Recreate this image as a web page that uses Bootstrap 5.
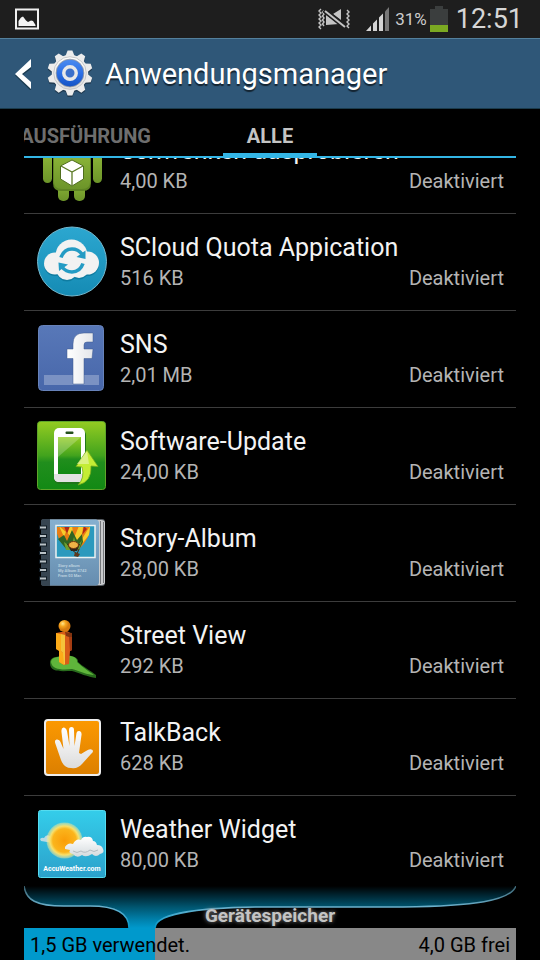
<!DOCTYPE html>
<html lang="de">
<head>
<meta charset="utf-8">
<meta name="viewport" content="width=device-width, initial-scale=1">
<title>Anwendungsmanager</title>
<link rel="stylesheet" href="https://cdn.jsdelivr.net/npm/bootstrap@5.3.0/dist/css/bootstrap.min.css">
<style>
  body { background: #000; color: #f3f3f3; font-family: Roboto, "Noto Sans", sans-serif; }
  svg { display: block; flex: none; }
  .screen { height: 100vh; overflow: hidden; }
  .statusbar, .titlebar, .tabs, .storage-panel { flex: none; }
  .statusbar { height: 38px; background: #1e1e1e; color: #ccc; padding: 0 17px 0 14px; }
  .pct { font-size: 17px; line-height: 24px; margin-left: 6px; margin-right: 3px; }
  .clock { font-size: 27px; line-height: 36px; color: #d6d6d6; margin-left: 8px; }
  .titlebar { height: 71px; background: #2f5778; border-top: 1px solid #54809c; border-bottom: 1px solid #1b3b4c; padding: 0 14px; }
  .titlebar h1 { font-size: 29px; line-height: 36px; font-weight: 400; color: #fff; text-shadow: 0 2px 1px rgba(0,0,0,.6); }
  .content-pad { margin: 0 24px; }
  .tabs { height: 49px; border-bottom: 2px solid #33b5e5; }
  .tab { border: 0; background: none; padding: 6px 0 0; font-size: 20px; line-height: 24px; font-weight: 700; color: #6e6e6e; overflow: hidden; white-space: nowrap; }
  .tab-prev { width: 127px; display: flex; justify-content: flex-end; align-items: center; }
  .tab-current { width: 94px; margin-left: 72px; color: #c4c4c4; border-bottom: 3px solid #33b5e5; padding-top: 9px; }
  .apps { min-height: 0; overflow: hidden; }
  .app { flex: none; height: 97px; padding: 12px 12px 0; gap: 12px; background: #000; color: #f3f3f3; border-bottom: 1px solid #3c3c3c; }
  .app:last-child { height: 90px; border-bottom: 0; }
  .app svg { overflow: visible; }
  .app-text { padding-top: 6px; }
  .app-name { font-size: 25px; line-height: 32px; white-space: nowrap; }
  .app-info { font-size: 20px; line-height: 28px; color: #b4b4b4; }
  .funnel svg { width: 100%; height: 42px; }
  .funnel-label { left: 0; right: 0; bottom: 0; font-size: 19px; line-height: 24px; font-weight: 700; color: #c4c4c4; text-shadow: 0 0 4px #888; }
  .storage { height: 32px; background: #888; }
  .storage .progress { --bs-progress-height: 32px; --bs-progress-bg: #888; --bs-progress-bar-bg: #0099cc; border-radius: 0; }
  .storage-text { inset: 0; padding: 2px 6px 0; font-size: 20px; line-height: 30px; color: #000; }
</style>
<script src="https://cdn.jsdelivr.net/npm/bootstrap@5.3.0/dist/js/bootstrap.bundle.min.js"></script>
</head>
<body>
<div class="screen d-flex flex-column">

  <div class="statusbar d-flex align-items-center">
    <svg class="me-auto" width="26" height="22" viewBox="0 0 26 22"><path d="M2 1.500H24V20.500H2Z" fill="#1e1e1e" stroke="#f0f0f0" stroke-width="2"/><path d="M4.500 18V13L7 9.500L9 8.500L12 12.500L14 14L17 12.500L19 13L21.500 17V18Z" fill="#f4f4f4"/></svg>
    <svg width="32" height="22" viewBox="0 0 32 22" fill="none" stroke="#c4c4c4"><path d="M3 1L1 3L3 5L1 7L3 9L1 11L3 13L1 15L3 17L1 19L3 21M6 2.500L4.500 4L6 6L4.500 8L6 10L4.500 12L6 14L4.500 16L6 18M29 2L31 4L29 6L31 8L29 10L31 12L29 14L31 16L29 18L31 20" stroke-width="1.400"/><path d="M15 6L23 1V12ZM8 7V17L21 16Z" fill="#c4c4c4" stroke="none"/><path d="M6 2L27 19" stroke="#1e1e1e" stroke-width="5"/><path d="M7 3L27 19" stroke-width="2"/></svg>
    <svg class="ms-3 me-0" width="23" height="24" viewBox="0 0 23 24" ><path d="M0 24L5 18.500V24ZM7 16.500L11 12.500V24H7ZM13 10.500L17 6.500V24H13Z" fill="#d4d4d4"/><path d="M19 4.500L23 0V24H19Z" fill="#777"/></svg>
    <span class="pct">31%</span>
    <svg width="18" height="26" viewBox="0 0 18 26"><path d="M5 0H13V3H18V26H0V3H5Z" fill="#3b3e3e"/><path d="M0 19H18V26H0Z" fill="#7ba922"/></svg>
    <span class="clock">12:51</span>
  </div>

  <header class="titlebar d-flex align-items-center">
    <a href="#" class="d-flex align-items-center" aria-label="Zurück">
      <svg width="17" height="32" viewBox="0 0 17 32"><path d="M17 3V11L8 17.500L17 26V33L1 17.500Z" fill="#1b3b50"/><path d="M17 1V9L8 16L17 24V31L1 16Z" fill="#fff"/></svg>
      <svg class="ms-3 me-0" width="46" height="48" viewBox="-24 -24 48 50">
        <defs>
          <linearGradient id="gearFill" x1="0" y1="0" x2="0" y2="1"><stop stop-color="#fff"/><stop offset="1" stop-color="#ddd"/></linearGradient>
          <linearGradient id="gearBlue" x1="0" y1="0" x2="0" y2="1"><stop stop-color="#4c8cf0"/><stop offset=".5" stop-color="#2d70e6"/><stop offset="1" stop-color="#1352c4"/></linearGradient>
          <g id="gearTeeth"><path id="gearTooth" d="M-5 -17L-2.500 -23.500H2.500L5 -17Z"/><use href="#gearTooth" transform="rotate(36)"/><use href="#gearTooth" transform="rotate(72)"/><use href="#gearTooth" transform="rotate(108)"/><use href="#gearTooth" transform="rotate(144)"/><use href="#gearTooth" transform="rotate(180)"/><use href="#gearTooth" transform="rotate(216)"/><use href="#gearTooth" transform="rotate(252)"/><use href="#gearTooth" transform="rotate(288)"/><use href="#gearTooth" transform="rotate(324)"/><circle r="19"/></g>
        </defs>
        <use href="#gearTeeth" y="1.500" fill="#203a50"/><use href="#gearTeeth" fill="#ececec"/>
        <circle r="17" fill="url(#gearFill)" stroke="#c4c4c4"/><circle r="14.500" fill="url(#gearBlue)" stroke="#999" stroke-width=".8"/><circle r="6.500" fill="#3a6fca" stroke="#e8e8e8" stroke-width="3.600"/>
      </svg>
    </a>
    <h1 class="mb-0 ms-2 ps-1">Anwendungsmanager</h1>
  </header>

  <nav class="tabs content-pad d-flex align-items-stretch">
    <button type="button" class="tab tab-prev">AUSFÜHRUNG</button>
    <button type="button" class="tab tab-current" aria-current="page">ALLE</button>
  </nav>

  <main class="apps content-pad flex-grow-1 d-flex flex-column justify-content-end">
    <div class="app d-flex">
      <svg width="72" height="72" viewBox="0 0 72 72">
        <defs><linearGradient id="droid" x1="0" y1="0" x2="0" y2="1"><stop stop-color="#8fb93a"/><stop offset="1" stop-color="#6c9429"/></linearGradient></defs>
        <g fill="url(#droid)"><path d="M18 20A18 15 0 0 1 54 20Z"/><rect x="7" y="22" width="9" height="32" rx="4.500"/><rect x="57" y="22" width="9" height="32" rx="4.500"/><rect x="22" y="50" width="11" height="22" rx="5"/><rect x="38" y="50" width="11" height="22" rx="5"/></g>
        <path d="M17 22H55V54Q55 62 47 62H25Q17 62 17 54Z" fill="#5f8523"/><path d="M18 22H54V53Q54 60 46 60H26Q18 60 18 53Z" fill="url(#droid)"/>
        <path d="M36 31L47.500 37V50L36 57L24.500 50V37Z" fill="#fff" stroke="#506e1d"/><path d="M25 37L36 43L47 37M36 43V56" fill="none" stroke="#5c7a25" stroke-width="1.300"/>
      </svg>
      <div class="app-text flex-grow-1"><div class="app-name">Schwenken ausprobieren</div><div class="app-info d-flex justify-content-between"><span>4,00 KB</span><span>Deaktiviert</span></div></div>
    </div>

    <div class="app d-flex">
      <svg width="72" height="72" viewBox="0 0 72 72">
        <defs><linearGradient id="cloudBg" x1="0" y1="0" x2="0" y2="1"><stop stop-color="#2ca7d0"/><stop offset="1" stop-color="#158bb4"/></linearGradient></defs>
        <circle cx="36" cy="35.500" r="34.500" fill="url(#cloudBg)" stroke="#75b9cf"/>
        <g fill="#0f7ca1" transform="translate(0 1.500)"><circle cx="19" cy="37.500" r="11"/><circle cx="51.500" cy="37" r="11.500"/><circle cx="35.500" cy="29" r="16"/><circle cx="31" cy="43.500" r="10.500"/><circle cx="43" cy="42" r="10"/></g>
        <g fill="#f2f2f2"><circle cx="19" cy="37.500" r="11"/><circle cx="51.500" cy="37" r="11.500"/><circle cx="35.500" cy="29.500" r="16"/><circle cx="31" cy="43.500" r="10.500"/><circle cx="43" cy="42" r="10"/></g>
        <path d="M25 31.500Q28 23 36 23Q42 23 46 28" fill="none" stroke="#249bc4" stroke-width="3.600"/><path d="M49.500 24.500V33L40.500 31Z" fill="#249bc4"/>
        <path d="M47 37.500Q44 46 36 46Q30 46 26 41" fill="none" stroke="#249bc4" stroke-width="3.600"/><path d="M22.500 36.500L32 38.500L23 45Z" fill="#249bc4"/>
      </svg>
      <div class="app-text flex-grow-1"><div class="app-name">SCloud Quota Appication</div><div class="app-info d-flex justify-content-between"><span>516 KB</span><span>Deaktiviert</span></div></div>
    </div>

    <div class="app d-flex">
      <svg width="72" height="72" viewBox="0 0 72 72">
        <defs><linearGradient id="snsBg" x1="0" y1="0" x2="0" y2="1"><stop stop-color="#5878b8"/><stop offset="1" stop-color="#4867aa"/></linearGradient><linearGradient id="snsF" x1="0" y1="0" x2="1" y2="0"><stop stop-color="#fff"/><stop offset="1" stop-color="#e4e6ea"/></linearGradient></defs>
        <rect x="2.500" y="2.500" width="65" height="65" rx="4" fill="url(#snsBg)" stroke="#6782b9"/><path d="M8 52H63V62H8Z" fill="#7b92c3"/>
        <path d="M37 61V35.500H31V26H37V21Q37 10 48 10H57V19H51Q48 19 48 22V26H57L56 35.500H48V61Z" fill="url(#snsF)" stroke="#3d588f" stroke-width=".5"/>
      </svg>
      <div class="app-text flex-grow-1"><div class="app-name">SNS</div><div class="app-info d-flex justify-content-between"><span>2,01 MB</span><span>Deaktiviert</span></div></div>
    </div>

    <div class="app d-flex">
      <svg width="72" height="72" viewBox="0 0 72 72">
        <defs><linearGradient id="updBg" x1="0" y1="0" x2="0" y2="1"><stop stop-color="#94cc22"/><stop offset=".5" stop-color="#42a31d"/><stop offset=".6" stop-color="#218e1d"/><stop offset="1" stop-color="#128914"/></linearGradient></defs>
        <rect x="1.500" y="1.500" width="68" height="68" rx="3" fill="url(#updBg)" stroke="#5fa52a"/>
        <rect x="18" y="10" width="32" height="54" rx="5" fill="#1f761a"/><rect x="18" y="8" width="31" height="54" rx="5" fill="#fff"/><path d="M18 54H49V57Q49 62 44 62H23Q18 62 18 57Z" fill="#e2e2e2"/>
        <path d="M22 17H45V54H22Z" fill="url(#updBg)"/><path d="M22 17H45L22 37Z" fill="#fff" opacity=".22"/><rect x="29.500" y="11.500" width="8" height="2.500" rx="1" fill="#24501b"/>
        <path d="M51 30L62 46.500L55 46Q56 62 42 65Q49 58 46 47L40 46.500Z" fill="#c4ed35" stroke="#72a91b" stroke-width=".8"/><path d="M51 31L53 44H41Z" fill="#e8f5ad" opacity=".65"/>
      </svg>
      <div class="app-text flex-grow-1"><div class="app-name">Software-Update</div><div class="app-info d-flex justify-content-between"><span>24,00 KB</span><span>Deaktiviert</span></div></div>
    </div>

    <div class="app d-flex">
      <svg width="72" height="72" viewBox="0 0 72 72">
        <defs><linearGradient id="book" x1="0" y1="0" x2="0" y2="1"><stop stop-color="#86b0d0"/><stop offset="1" stop-color="#668daf"/></linearGradient><clipPath id="photoClip"><path d="M21 10H58V40H21Z"/></clipPath></defs>
        <rect x="5" y="2" width="64" height="67" rx="3" fill="#575d63"/><path d="M60 3H65Q69 3 69 6V65Q69 68 65 68H60Z" fill="#c9cbcd"/><path d="M64.500 4V67M67.500 5V66" stroke="#74777a"/><path d="M14 2.500H60Q63 3 63 6V65Q63 68 60 68.500H14Z" fill="url(#book)"/>
        <path d="M5 5Q5 2 8 2H14V69H8Q5 69 5 66Z" fill="#374551"/>
        <path d="M3 10.500H11M3 19H11M3 27.500H11M3 36H11M3 44.500H11M3 53H11M3 61.500H11" stroke="#111c25" stroke-width="4"/><path d="M4 10.500H10M4 19H10M4 27.500H10M4 36H10M4 44.500H10M4 53H10M4 61.500H10" stroke="#bac2c7" stroke-width="2"/>
        <path d="M20 8.500H59V40.500H20Z" fill="#2c99bd" stroke="#ebf1f2" stroke-width="1.500"/>
        <g clip-path="url(#photoClip)"><path d="M19 8H54Q55 21 43 32L34 33Q21 26 20 10Z" fill="#e87d14"/><path d="M23 9L28 20L32 9H36L38 21L43 9H47L46 22L54 9L53 18L45 28Z" fill="#f7cd2c"/><path d="M28 9L31 17L34 9M48 9L46 18L51 12" fill="#b12818"/><path d="M22 22L28 18L31 24L36 13L41 23L46 17L47 25L43 33H31Z" fill="#306423"/><path d="M28 25L35 30L38 20L41 30L46 23L43 33H30Z" fill="#6d9f32"/><path d="M31 27H44L41 34H35Z" fill="#2b2418"/><ellipse cx="37.500" cy="28" rx="5" ry="3.500" fill="#efb246" stroke="#74380e"/><path d="M35 32L41 37L43 32" fill="none" stroke="#432713"/><path d="M39 35L44 37L42 40L38 39Z" fill="#5b371c"/></g>
        <g fill="#b9cfde" font-family="Roboto, sans-serif" font-weight="700" font-size="4"><text x="22" y="50">Story album</text><text x="22" y="55">My Album S742</text><text x="22" y="60">From 03 Mar.</text></g>
      </svg>
      <div class="app-text flex-grow-1"><div class="app-name">Story-Album</div><div class="app-info d-flex justify-content-between"><span>28,00 KB</span><span>Deaktiviert</span></div></div>
    </div>

    <div class="app d-flex">
      <svg width="72" height="72" viewBox="0 0 72 72">
        <defs><radialGradient id="pegHead" cx=".35" cy=".3"><stop stop-color="#ffe58a"/><stop offset=".5" stop-color="#f6a51d"/><stop offset="1" stop-color="#d67b10"/></radialGradient></defs>
        <path d="M14 49C14 41 25 43 29 42C36 41 43 44 42 48C46 52 55 57 60 61V64C52 63 43 59 36 57C26 57 14 59 14 49Z" fill="#286b1c"/><path d="M15 48C15 42 25 43 29 42C36 41 42 44 41 48C46 53 54 58 58 61C52 61 43 57 36 55C27 56 16 56 15 48Z" fill="#5fb53b"/>
        <path d="M20 19L31 17L36 20V36L34 37L33 50L28 51L23 48V36L20 35Z" fill="#d95d18"/><path d="M20 19L25 20V37L28 40V51L23 48V37L20 35Z" fill="#fdab19"/><path d="M25 20L29 21V50L28 51L27 39L25 37Z" fill="#f5c33a"/><path d="M29 18L36 19V24L30 22Z" fill="#803410"/><path d="M33 23H36V36L34 37Z" fill="#a43c12"/><circle cx="28.500" cy="12" r="6" fill="url(#pegHead)"/>
      </svg>
      <div class="app-text flex-grow-1"><div class="app-name">Street View</div><div class="app-info d-flex justify-content-between"><span>292 KB</span><span>Deaktiviert</span></div></div>
    </div>

    <div class="app d-flex">
      <svg width="72" height="72" viewBox="0 0 72 72">
        <defs><linearGradient id="talkBg" x1="0" y1="0" x2="0" y2="1"><stop stop-color="#fc9901"/><stop offset="1" stop-color="#dc7f00"/></linearGradient><linearGradient id="talkHand" x1="0" y1="0" x2="0" y2="1"><stop stop-color="#fff"/><stop offset="1" stop-color="#dcdcdc"/></linearGradient></defs>
        <rect x="9" y="9" width="55" height="55" rx="3" fill="url(#talkBg)" stroke="#eee" stroke-width="2"/>
        <path d="M25 49L19.500 33Q18 29 20.500 28.500Q23.500 28 24.500 31L27.500 38L25.500 21Q25 17 27.500 16.500Q30 16.500 31 20L33.500 35L33 19Q33 16 35.500 16Q38 16 38 19L38.500 35L40.500 22Q41 19.500 43.500 20Q46 20.500 45.500 24L43 42L45 43L50 40Q54 37 56.500 39Q58 41 55 43L46 53Q42 58 35 57Q28 57 25 49Z" fill="url(#talkHand)"/>
      </svg>
      <div class="app-text flex-grow-1"><div class="app-name">TalkBack</div><div class="app-info d-flex justify-content-between"><span>628 KB</span><span>Deaktiviert</span></div></div>
    </div>

    <div class="app d-flex">
      <svg width="72" height="72" viewBox="0 0 72 72">
        <defs><linearGradient id="skyBg" x1="0" y1="0" x2="0" y2="1"><stop stop-color="#34cdea"/><stop offset="1" stop-color="#2ba1cb"/></linearGradient><radialGradient id="sun"><stop stop-color="#fa9d08"/><stop offset=".65" stop-color="#fbb51c"/><stop offset=".8" stop-color="#f8df6a"/><stop offset="1" stop-color="#f8eb9b" stop-opacity=".4"/></radialGradient><linearGradient id="cloudFill" x1="0" y1="0" x2="0" y2="1"><stop stop-color="#fff"/><stop offset="1" stop-color="#d4dadd"/></linearGradient></defs>
        <rect x="2.500" y="2.500" width="67" height="67" rx="2" fill="url(#skyBg)" stroke="#55dcf0"/>
        <path d="M4 31Q6 29 8 30Q10 26 14 28L17 35L5 33Z" fill="#b8dae4"/><circle cx="28.500" cy="32.500" r="18" fill="url(#sun)"/>
        <path d="M29 39Q32 34 37 36Q40 30 45 32Q47 28 51 29Q56 28 57 33Q60 33 61 37Q66 37 67 41Q69 45 64 46Q60 50 56 46Q50 50 46 47Q41 51 37 46Q32 45 34 42L29 41Z" fill="url(#cloudFill)"/><path d="M37 43Q41 46 45 43Q49 46 54 42Q58 45 62 42" fill="none" stroke="#b4bdc2"/>
        <text x="36" y="63" text-anchor="middle" fill="#fff" font-family="Roboto, sans-serif" font-weight="700" font-size="7">AccuWeather.com</text>
      </svg>
      <div class="app-text flex-grow-1"><div class="app-name">Weather Widget</div><div class="app-info d-flex justify-content-between"><span>80,00 KB</span><span>Deaktiviert</span></div></div>
    </div>
  </main>

  <footer class="storage-panel content-pad">
    <div class="funnel position-relative">
      <svg viewBox="0 0 492 42" preserveAspectRatio="none">
        <defs>
          <linearGradient id="funnelFill" x1="0" y1="0" x2="0" y2="42" gradientUnits="userSpaceOnUse"><stop stop-color="#000"/><stop offset=".25" stop-color="#002a38"/><stop offset=".5" stop-color="#00556f"/><stop offset=".8" stop-color="#0080ab"/><stop offset="1" stop-color="#0099cc"/></linearGradient>
          <linearGradient id="funnelEdge" x1="0" y1="0" x2="0" y2="42" gradientUnits="userSpaceOnUse"><stop stop-color="#39606e"/><stop offset=".5" stop-color="#6db3cf"/><stop offset="1" stop-color="#0099cc"/></linearGradient>
        </defs>
        <path d="M0 0C2 14 12 20 40 20H66C93 20 105 28 105 42H131C131 26 186 21 246 21H379C450 20 486 15 492 0Z" fill="url(#funnelFill)"/>
        <path d="M0 0C2 14 12 20 40 20H66C93 20 105 28 105 42M131 42C131 26 186 21 246 21H379C450 20 486 15 492 0" fill="none" stroke="url(#funnelEdge)" stroke-width="1.500"/>
      </svg>
      <div class="funnel-label position-absolute text-center">Gerätespeicher</div>
    </div>
    <div class="storage position-relative">
      <div class="progress" role="progressbar" aria-label="Gerätespeicher" aria-valuenow="27" aria-valuemin="0" aria-valuemax="100"><div class="progress-bar" style="width: 26.700%"></div></div>
      <div class="storage-text position-absolute d-flex justify-content-between"><span>1,5 GB verwendet.</span><span>4,0 GB frei</span></div>
    </div>
  </footer>
</div>
</body>
</html>
